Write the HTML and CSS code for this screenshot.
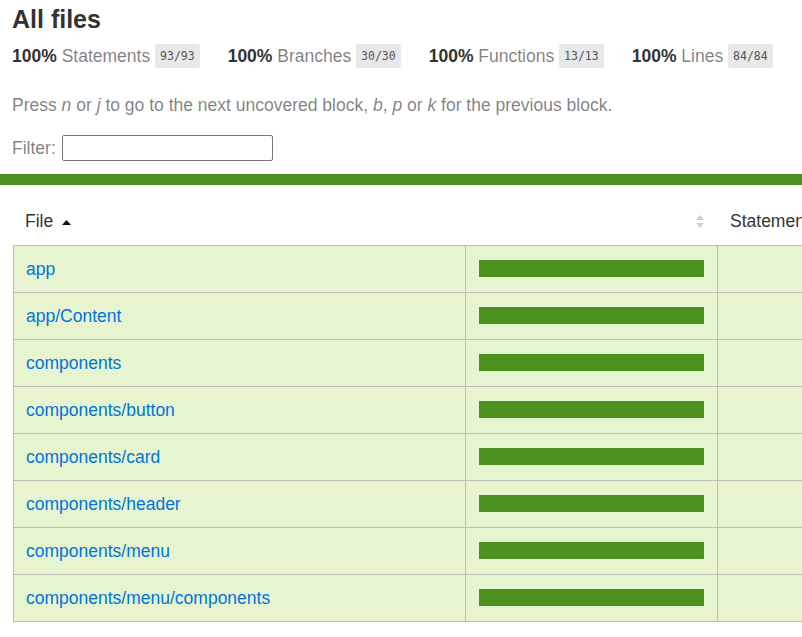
FILE: index.html
```html
<!DOCTYPE html>
<html lang="en">
<head>
<meta charset="utf-8">
<title>Code coverage report for All files</title>
<link rel="stylesheet" href="styles.css">
</head>
<body>
<div class="wrapper">
  <div class="header">
    <h1>All files</h1>
    <div class="summary">
      <div class="metric"><span class="strong">100% </span><span class="quiet">Statements</span> <span class="fraction">93/93</span></div>
      <div class="metric"><span class="strong">100% </span><span class="quiet">Branches</span> <span class="fraction">30/30</span></div>
      <div class="metric"><span class="strong">100% </span><span class="quiet">Functions</span> <span class="fraction">13/13</span></div>
      <div class="metric"><span class="strong">100% </span><span class="quiet">Lines</span> <span class="fraction">84/84</span></div>
    </div>
    <p class="quiet hint">Press <em>n</em> or <em>j</em> to go to the next uncovered block, <em>b</em>, <em>p</em> or <em>k</em> for the previous block.</p>
    <div class="quiet filter"><span>Filter:</span><input class="search" type="search" aria-label="Filter"></div>
  </div>
  <div class="status-line"></div>
  <div class="table-wrap">
    <table class="coverage-summary">
      <thead>
        <tr>
          <th class="file w-file">File<svg class="sort-asc" width="9" height="5" viewBox="0 0 9 5"><path d="M0 5 L4.5 0 L9 5 Z" fill="#111"/></svg></th>
          <th class="pic w-pic"><svg class="sorter" width="8" height="13" viewBox="0 0 8 13"><path d="M0 5 L4 0 L8 5 Z" fill="#d0d0d0"/><path d="M0 8 L8 8 L4 13 Z" fill="#d0d0d0"/></svg></th>
          <th class="pct w-pct">Statements</th>
        </tr>
      </thead>
      <tbody>
        <tr>
          <td class="file"><a href="#">app</a></td>
          <td class="pic"><div class="chart"><div class="cover-fill"></div></div></td>
          <td class="pct"></td>
        </tr>
        <tr>
          <td class="file"><a href="#">app/Content</a></td>
          <td class="pic"><div class="chart"><div class="cover-fill"></div></div></td>
          <td class="pct"></td>
        </tr>
        <tr>
          <td class="file"><a href="#">components</a></td>
          <td class="pic"><div class="chart"><div class="cover-fill"></div></div></td>
          <td class="pct"></td>
        </tr>
        <tr>
          <td class="file"><a href="#">components/button</a></td>
          <td class="pic"><div class="chart"><div class="cover-fill"></div></div></td>
          <td class="pct"></td>
        </tr>
        <tr>
          <td class="file"><a href="#">components/card</a></td>
          <td class="pic"><div class="chart"><div class="cover-fill"></div></div></td>
          <td class="pct"></td>
        </tr>
        <tr>
          <td class="file"><a href="#">components/header</a></td>
          <td class="pic"><div class="chart"><div class="cover-fill"></div></div></td>
          <td class="pct"></td>
        </tr>
        <tr>
          <td class="file"><a href="#">components/menu</a></td>
          <td class="pic"><div class="chart"><div class="cover-fill"></div></div></td>
          <td class="pct"></td>
        </tr>
        <tr>
          <td class="file"><a href="#">components/menu/components</a></td>
          <td class="pic"><div class="chart"><div class="cover-fill"></div></div></td>
          <td class="pct"></td>
        </tr>
      </tbody>
    </table>
  </div>
</div>
</body>
</html>
```
FILE: styles.css
```css
html, body {
  margin: 0;
  padding: 0;
}

body {
  font-family: "Liberation Sans", Arial, Helvetica, sans-serif;
  font-size: 17.5px;
  color: #333;
  background: #fff;
  overflow: hidden;
}

.wrapper {
  width: 100%;
}

.header {
  padding: 5px 12px 13px 12px;
}

h1 {
  margin: 0;
  font-size: 25px;
  line-height: 28px;
  font-weight: bold;
}

.summary {
  display: flex;
  margin-top: 11px;
  line-height: 24px;
  height: 24px;
}

.metric {
  white-space: nowrap;
  margin-right: 28px;
}

.strong {
  font-weight: bold;
}

.quiet {
  color: rgba(0, 0, 0, 0.5);
}

.fraction {
  display: inline-block;
  vertical-align: top;
  height: 24px;
  line-height: 24px;
  padding: 0 5px;
  font-family: "DejaVu Sans Mono", "Liberation Mono", monospace;
  font-size: 11.5px;
  color: #555;
  background: #e8e8e8;
  border-radius: 3px;
}

.hint {
  margin: 25px 0 0 0;
  line-height: 24px;
}

.filter {
  display: flex;
  align-items: center;
  margin-top: 18px;
  height: 26px;
}

.search {
  box-sizing: border-box;
  width: 211px;
  height: 26px;
  margin: 0 0 0 6px;
  padding: 1px 2px;
  border: 1px solid #767676;
  border-radius: 2px;
  font-size: 13.3px;
  background: #fff;
}

.status-line {
  height: 11px;
  background: #4d9221;
}

.table-wrap {
  padding: 12px 0 0 13px;
}

.coverage-summary {
  border-collapse: separate;
  border-spacing: 0;
  table-layout: fixed;
  width: 845px;
}

.coverage-summary th,
.coverage-summary td {
  box-sizing: border-box;
  padding: 12px;
  white-space: nowrap;
}

.coverage-summary th {
  font-weight: normal;
  text-align: left;
  line-height: 24px;
  color: #333;
}

.w-file { width: 453px; }
.w-pic { width: 252px; }
.w-pct { width: 140px; }

.coverage-summary th.pic {
  text-align: right;
  padding-right: 14px;
}

.sort-asc {
  margin-left: 9px;
  vertical-align: 2px;
}

.sorter {
  vertical-align: -1px;
}

.coverage-summary td {
  line-height: 22px;
  background: #e6f5d0;
  border-bottom: 1px solid #bbb;
  border-right: 1px solid #bbb;
}

.coverage-summary tbody tr:first-child td {
  border-top: 1px solid #bbb;
}

.coverage-summary td.file {
  border-left: 1px solid #bbb;
}

.coverage-summary td.pct {
  text-align: right;
}

.coverage-summary td.pic {
  padding: 14px 13px 15px 13px;
}

.coverage-summary a {
  color: #0074d9;
  text-decoration: none;
}

.chart {
  line-height: 0;
  height: 17px;
}

.cover-fill {
  height: 17px;
  width: 100%;
  background: #4d9221;
}
```
